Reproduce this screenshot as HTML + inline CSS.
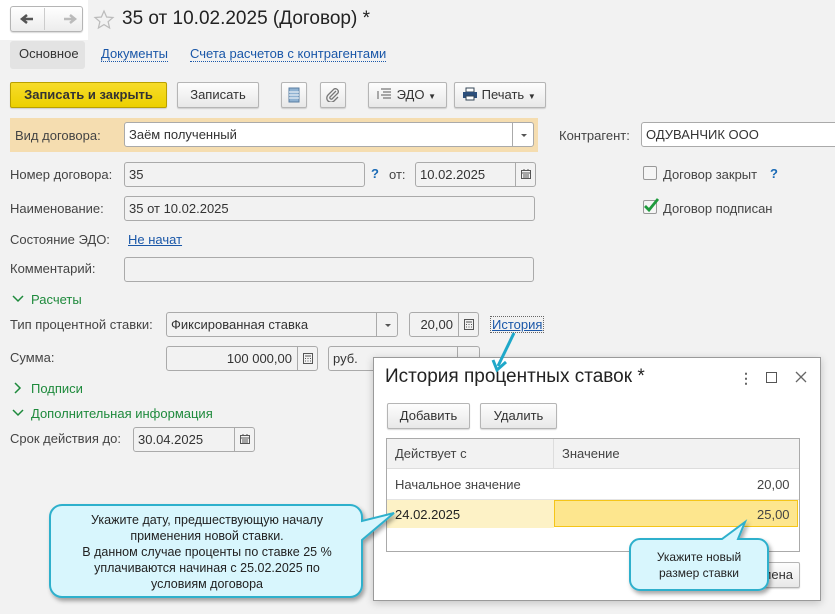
<!DOCTYPE html>
<html><head><meta charset="utf-8">
<style>
*{box-sizing:border-box;margin:0;padding:0}
body{width:835px;height:614px;overflow:hidden;background:#f2f2f2;font-family:"Liberation Sans",Arial,sans-serif;font-size:13px;color:#333;position:relative}
.a{position:absolute;white-space:nowrap}
.inp{position:absolute;border:1px solid #aaa;border-radius:3px;background:#f2f2f2;height:25px;line-height:23px;padding-left:4px;color:#333;font-size:13px}
.w{background:#fff}
.btn{position:absolute;border:1px solid #b5b5b5;border-radius:2px;background:linear-gradient(#fdfdfd,#e8e8e8);height:26px;line-height:24px;text-align:center;color:#333;box-shadow:0 1px 1px rgba(0,0,0,.15);font-size:13px}
.lbl{position:absolute;white-space:nowrap;color:#444;font-size:13px}
.lnk{color:#1a57a8;border-bottom:1px dotted #1a57a8}
.grn{color:#1e8a3c}
.dd{position:absolute;right:0;top:0;bottom:0;width:21px;border-left:1px solid #aaa}
.dd:after{content:"";position:absolute;left:8px;top:11px;border:3px solid transparent;border-top:3px solid #555}
.ic{position:absolute;right:0;top:0;bottom:0;width:20px;border-left:1px solid #aaa}
.ic svg{position:absolute;left:5px;top:6px}
</style></head><body>
<div class="a" style="left:0;top:0;width:88px;height:40px;background:#fff"></div>
<div class="btn" style="left:10px;top:6px;width:73px;height:26px;border-radius:3px;background:linear-gradient(#fff,#ececec)"></div>
<div class="a" style="left:44px;top:8px;width:1px;height:22px;background:#ccc"></div>
<svg class="a" style="left:19px;top:13px" width="60" height="12"><path d="M3 6h11M8 2L3 6l5 4" stroke="#555" stroke-width="2.5" fill="none"/><path d="M45 6h11M51 2l5 4-5 4" stroke="#bbb" stroke-width="2.5" fill="none"/></svg>
<svg class="a" style="left:93px;top:9px" width="22" height="22"><path d="M11 2l2.6 6 6.4.5-4.9 4.2 1.5 6.3L11 15.6 5.4 19l1.5-6.3L2 8.5l6.4-.5z" fill="none" stroke="#bbb" stroke-width="1.2"/></svg>
<div class="a" style="left:122px;top:8px;font-size:19px;color:#222">35 от 10.02.2025 (Договор) *</div>
<div class="a" style="left:10px;top:41px;width:75px;height:28px;background:#e3e3e3;border-radius:3px"></div>
<div class="lbl" style="left:19px;top:46px;color:#333">Основное</div>
<div class="lbl" style="left:101px;top:46px"><span class="lnk">Документы</span></div>
<div class="lbl" style="left:190px;top:46px"><span class="lnk">Счета расчетов с контрагентами</span></div>

<div class="btn" style="left:10px;top:82px;width:157px;background:linear-gradient(#f7dc2a,#ecd000);border-color:#b9a000;font-weight:bold;color:#333">Записать и закрыть</div>
<div class="btn" style="left:177px;top:82px;width:82px">Записать</div>
<div class="btn" style="left:281px;top:82px;width:26px"><svg width="12" height="16" style="margin-top:4px"><rect x="1" y="1" width="10" height="14" fill="#8fb2d2" stroke="#5b7fa3"/><path d="M1 5h10M1 8h10M1 11h10" stroke="#fff"/></svg></div>
<div class="btn" style="left:320px;top:82px;width:26px"><svg width="14" height="14" style="margin-top:5px"><path d="M10 3L4 9a1.5 1.5 0 0 0 2 2l6-6a3 3 0 0 0-4-4L2 7a4 4 0 0 0 6 6l4-4" fill="none" stroke="#777" stroke-width="1.3"/></svg></div>
<div class="btn" style="left:368px;top:82px;width:79px;text-align:left;padding-left:8px"><svg width="16" height="14" style="vertical-align:-2px"><path d="M4 2h10M6 5h8M4 8h10M6 11h8M1 4v8" stroke="#777" stroke-width="1.2" fill="none"/></svg> ЭДО <span style="font-size:8px">▼</span></div>
<div class="btn" style="left:454px;top:82px;width:92px;text-align:left;padding-left:7px"><svg width="16" height="14" style="vertical-align:-2px"><rect x="4" y="1" width="8" height="4" fill="#fff" stroke="#345"/><rect x="1" y="5" width="14" height="6" fill="#2c4f7c"/><rect x="4" y="9" width="8" height="4" fill="#fff" stroke="#345"/></svg> Печать <span style="font-size:8px">▼</span></div>

<div class="a" style="left:10px;top:118px;width:528px;height:34px;background:#f5ddb0"></div>
<div class="lbl" style="left:15px;top:128px">Вид договора:</div>
<div class="inp w" style="left:124px;top:122px;width:410px">Заём полученный<div class="dd"></div></div>
<div class="lbl" style="left:559px;top:128px">Контрагент:</div>
<div class="inp w" style="left:641px;top:122px;width:200px">ОДУВАНЧИК ООО</div>

<div class="lbl" style="left:10px;top:167px">Номер договора:</div>
<div class="inp" style="left:124px;top:162px;width:241px">35</div>
<div class="lbl" style="left:371px;top:166px;color:#1a6ab5;font-weight:bold">?</div>
<div class="lbl" style="left:389px;top:167px">от:</div>
<div class="inp" style="left:415px;top:162px;width:121px">10.02.2025<div class="ic"><svg width="10" height="10"><rect x=".5" y="1.5" width="9" height="8" fill="none" stroke="#555"/><path d="M1 4h8M3 0v2M7 0v2M2 6h6M2 8h6" stroke="#555"/></svg></div></div>
<div class="a" style="left:643px;top:166px;width:14px;height:14px;border:1px solid #999;border-radius:2px;background:#f5f5f5"></div>
<div class="lbl" style="left:663px;top:167px">Договор закрыт</div>
<div class="lbl" style="left:770px;top:166px;color:#1a6ab5;font-weight:bold">?</div>

<div class="lbl" style="left:10px;top:201px">Наименование:</div>
<div class="inp" style="left:124px;top:196px;width:411px">35 от 10.02.2025</div>
<div class="a" style="left:643px;top:200px;width:14px;height:14px;border:1px solid #999;border-radius:2px;background:#f5f5f5"></div>
<svg class="a" style="left:642px;top:196px" width="18" height="18"><path d="M3 10l4 4 9-11" stroke="#1e9a3c" stroke-width="2.8" fill="none"/></svg>
<div class="lbl" style="left:663px;top:201px">Договор подписан</div>

<div class="lbl" style="left:10px;top:232px">Состояние ЭДО:</div>
<div class="lbl" style="left:128px;top:232px;color:#1a57a8;text-decoration:underline">Не начат</div>
<div class="lbl" style="left:10px;top:261px">Комментарий:</div>
<div class="inp" style="left:124px;top:257px;width:410px"></div>

<svg class="a" style="left:12px;top:295px" width="12" height="9"><path d="M1 1l5 5 5-5" stroke="#1e8a3c" stroke-width="1.5" fill="none"/></svg>
<div class="lbl grn" style="left:31px;top:292px">Расчеты</div>
<div class="lbl" style="left:10px;top:317px">Тип процентной ставки:</div>
<div class="inp" style="left:166px;top:312px;width:232px">Фиксированная ставка<div class="dd"></div></div>
<div class="inp" style="left:409px;top:312px;width:70px;text-align:right;padding-right:25px">20,00<div class="ic"><svg width="10" height="11"><rect x=".5" y=".5" width="9" height="10" fill="none" stroke="#555"/><path d="M2 3h6M2 5.5h1M4.5 5.5h1M7 5.5h1M2 8h1M4.5 8h1M7 8h1" stroke="#555"/></svg></div></div>
<div class="a" style="left:490px;top:316px;border:1px dotted #666;padding:0 1px;color:#1a57a8;text-decoration:underline">История</div>

<div class="lbl" style="left:10px;top:350px">Сумма:</div>
<div class="inp" style="left:166px;top:346px;width:152px;text-align:right;padding-right:25px">100 000,00<div class="ic"><svg width="10" height="11"><rect x=".5" y=".5" width="9" height="10" fill="none" stroke="#555"/><path d="M2 3h6M2 5.5h1M4.5 5.5h1M7 5.5h1M2 8h1M4.5 8h1M7 8h1" stroke="#555"/></svg></div></div>
<div class="inp" style="left:328px;top:346px;width:152px">руб.<div class="ic" style="width:22px"></div></div>

<svg class="a" style="left:14px;top:382px" width="9" height="12"><path d="M1 1l5 5-5 5" stroke="#1e8a3c" stroke-width="1.5" fill="none"/></svg>
<div class="lbl grn" style="left:31px;top:381px">Подписи</div>
<svg class="a" style="left:12px;top:409px" width="12" height="9"><path d="M1 1l5 5 5-5" stroke="#1e8a3c" stroke-width="1.5" fill="none"/></svg>
<div class="lbl grn" style="left:31px;top:406px">Дополнительная информация</div>
<div class="lbl" style="left:10px;top:431px">Срок действия до:</div>
<div class="inp" style="left:133px;top:427px;width:122px">30.04.2025<div class="ic"><svg width="10" height="10"><rect x=".5" y="1.5" width="9" height="8" fill="none" stroke="#555"/><path d="M1 4h8M3 0v2M7 0v2M2 6h6M2 8h6" stroke="#555"/></svg></div></div>

<!-- dialog -->
<div class="a" style="left:373px;top:357px;width:448px;height:244px;background:#fff;border:1px solid #9a9a9a;box-shadow:0 2px 8px rgba(0,0,0,.2)"></div>
<div class="a" style="left:385px;top:366px;font-size:19px;color:#222">История процентных ставок *</div>
<div class="a" style="left:739px;top:370px;font-size:14px;color:#666;font-weight:bold">⋮</div>
<div class="a" style="left:766px;top:372px;width:11px;height:11px;border:1.5px solid #555"></div>
<svg class="a" style="left:795px;top:371px" width="12" height="12"><path d="M1 1l10 10M11 1L1 11" stroke="#666" stroke-width="1.3"/></svg>
<div class="btn" style="left:387px;top:403px;width:83px">Добавить</div>
<div class="btn" style="left:480px;top:403px;width:77px">Удалить</div>
<div class="a" style="left:386px;top:438px;width:414px;height:114px;border:1px solid #aaa;background:#fff"></div>
<div class="a" style="left:387px;top:439px;width:412px;height:30px;background:#f2f2f2;border-bottom:1px solid #ddd"></div>
<div class="a" style="left:553px;top:439px;width:1px;height:30px;background:#ddd"></div>
<div class="lbl" style="left:395px;top:446px">Действует с</div>
<div class="lbl" style="left:562px;top:446px">Значение</div>
<div class="lbl" style="left:395px;top:477px">Начальное значение</div>
<div class="lbl" style="left:757px;top:477px">20,00</div>
<div class="a" style="left:387px;top:499px;width:412px;height:1px;background:#e4e4e4"></div>
<div class="a" style="left:387px;top:500px;width:167px;height:28px;background:#fdf2c6"></div>
<div class="a" style="left:554px;top:500px;width:244px;height:27px;background:#fde68e;border:1.5px solid #f5c518"></div>
<div class="lbl" style="left:395px;top:507px;color:#222">24.02.2025</div>
<div class="lbl" style="left:757px;top:507px">25,00</div>
<div class="btn" style="left:740px;top:562px;width:60px;text-align:right;padding-right:6px">Отмена</div>

<!-- callouts -->
<svg class="a" style="left:0;top:0" width="835" height="614">
<defs><filter id="sh" x="-10%" y="-10%" width="130%" height="140%"><feDropShadow dx="2" dy="3" stdDeviation="2" flood-opacity=".35"/></filter></defs>
<path d="M62 505H350a12 12 0 0 1 12 12v4L394 513 362 540v45a12 12 0 0 1-12 12H62a12 12 0 0 1-12-12V517a12 12 0 0 1 12-12z" fill="#d8f6fd" stroke="#2fb0cc" stroke-width="2" filter="url(#sh)"/>
<path d="M640 539H722L745 522L738 539H758a10 10 0 0 1 10 10v31a10 10 0 0 1-10 10H640a10 10 0 0 1-10-10V549a10 10 0 0 1 10-10z" fill="#d8f6fd" stroke="#2fb0cc" stroke-width="2" filter="url(#sh)"/>
<path d="M514 333L498 366" stroke="#1fa8c9" stroke-width="3" fill="none"/>
<path d="M493 360L497 370 506 362" stroke="#1fa8c9" stroke-width="3" fill="none"/>
</svg>
<div class="a" style="left:52px;top:512px;width:310px;text-align:center;font-size:12.5px;line-height:16px;color:#222">Укажите дату, предшествующую началу<br>применения новой ставки.<br>В данном случае проценты по ставке 25 %<br>уплачиваются начиная с 25.02.2025 по<br>условиям договора</div>
<div class="a" style="left:630px;top:549px;width:138px;text-align:center;font-size:12px;line-height:16px;color:#222">Укажите новый<br>размер ставки</div>
</body></html>
